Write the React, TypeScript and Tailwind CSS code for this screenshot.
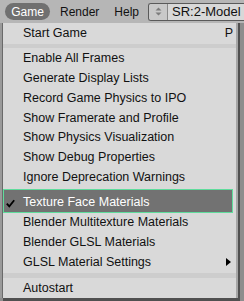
import { Fragment } from 'react'

type Item =
  | { kind: 'item'; label: string; hotkey?: string; checked?: boolean; active?: boolean; submenu?: boolean }
  | { kind: 'sep' }

const items: Item[] = [
  { kind: 'item', label: 'Start Game', hotkey: 'P' },
  { kind: 'sep' },
  { kind: 'item', label: 'Enable All Frames' },
  { kind: 'item', label: 'Generate Display Lists' },
  { kind: 'item', label: 'Record Game Physics to IPO' },
  { kind: 'item', label: 'Show Framerate and Profile' },
  { kind: 'item', label: 'Show Physics Visualization' },
  { kind: 'item', label: 'Show Debug Properties' },
  { kind: 'item', label: 'Ignore Deprecation Warnings' },
  { kind: 'item', label: 'Texture Face Materials', checked: true, active: true },
  { kind: 'item', label: 'Blender Multitexture Materials' },
  { kind: 'item', label: 'Blender GLSL Materials' },
  { kind: 'item', label: 'GLSL Material Settings', submenu: true },
  { kind: 'sep' },
  { kind: 'item', label: 'Autostart' },
]

function Check() {
  return (
    <svg width="9" height="9" viewBox="0 0 9 9" className="absolute left-[2px] top-[9px]">
      <path d="M0.8 4.6 L3.3 7.4 L8.2 1.2" fill="none" stroke="#000" strokeWidth="1.8" />
    </svg>
  )
}

function Arrow() {
  return (
    <svg width="5" height="8" viewBox="0 0 5 8">
      <path d="M0 0 L5 4 L0 8 Z" fill="#000" />
    </svg>
  )
}

export default function App() {
  return (
    <div className="w-[244px] h-[301px] overflow-hidden bg-[#8d8d8d] flex flex-col text-[12.5px] text-[#111]" style={{ fontFamily: '"Liberation Sans", Arial, sans-serif' }}>
      {/* header bar */}
      <div className="h-[23px] shrink-0 bg-[#b6b6b6] flex items-center text-[12px]">
        <div className="ml-[5px] h-[17px] w-[45px] rounded-full bg-[#707070] text-white flex items-center justify-center">Game</div>
        <span className="ml-[10px]">Render</span>
        <span className="ml-[15px]">Help</span>
        <div className="ml-[9px] h-[18px] flex-1 flex border border-[#5a5a5a] border-r-0 rounded-l-[3px] overflow-hidden">
          <div className="w-[19px] bg-[#c9c9c9] border-r border-[#8a8a8a] flex items-center justify-center">
            <svg width="7" height="9" viewBox="0 0 7 9">
              <path d="M0.5 3.6 L3.5 0.6 L6.5 3.6 Z M0.5 5.4 L3.5 8.4 L6.5 5.4 Z" fill="#7c7c7c" />
            </svg>
          </div>
          <div className="flex-1 bg-[#d8d8d8] flex items-center pl-[4px] text-[13px] whitespace-nowrap">SR:2-Model</div>
        </div>
      </div>

      {/* body */}
      <div className="flex h-[275px] shrink-0">
        <div className="w-[3px] bg-[#9a9a9a] border-r border-[#6a6a6a]" />
        <div className="w-[233px] bg-[#d9d9d9] flex flex-col">
          {items.map((it, i) => {
            if (it.kind === 'sep') {
              const last = i === items.length - 2
              return (
                <div key={i} className="h-[6px] flex items-center">
                  <div className={`w-full ${last ? 'h-[5px]' : 'h-[4px]'} bg-[#cdcdcd]`} />
                </div>
              )
            }
            if (it.active) {
              return (
                <Fragment key={i}>
                  <div className="h-[2px]" />
                  <div className="relative h-[24px] mr-[3px] bg-[#727272] border border-[#5fdc9c] text-white flex items-center pl-[19px] pt-[2px]">
                    {it.checked && <Check />}
                    {it.label}
                  </div>
                </Fragment>
              )
            }
            return (
              <div key={i} className="h-[20px] flex items-center justify-between pl-[20px] pr-[2px] whitespace-nowrap">
                <span>{it.label}</span>
                {it.hotkey && <span className="mr-[1px]">{it.hotkey}</span>}
                {it.submenu && (
                  <span className="mr-[3px] flex items-center">
                    <Arrow />
                  </span>
                )}
              </div>
            )
          })}
        </div>
        <div className="w-[2px] bg-[#a6a6a6]" />
        <div className="w-[2px] bg-[#505050]" />
      </div>
      <div className="h-[3px] ml-[3px] w-[237px] bg-[#505050]" />
    </div>
  )
}
